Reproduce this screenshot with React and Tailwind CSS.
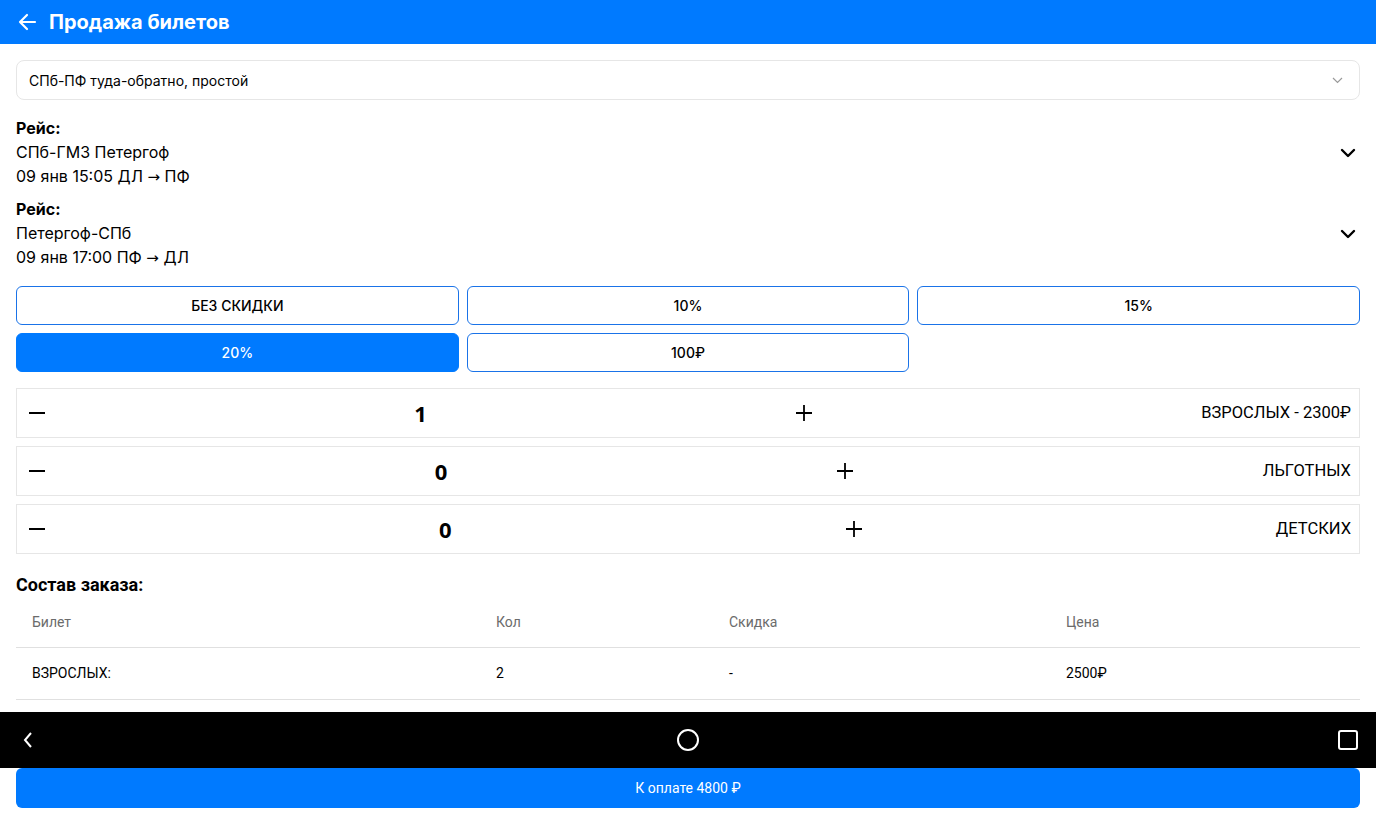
import { useState } from 'react'

const discounts = ['БЕЗ СКИДКИ', '10%', '15%', '20%', '100₽']

const trips = [
  { name: 'СПб-ГМЗ Петергоф', from: '09 янв 15:05 ДЛ', to: 'ПФ' },
  { name: 'Петергоф-СПб', from: '09 янв 17:00 ПФ', to: 'ДЛ' },
]

function Minus() {
  return (
    <svg width="16" height="16" viewBox="0 0 16 16">
      <path d="M0 8h16" stroke="#000" strokeWidth="2" />
    </svg>
  )
}

function Plus() {
  return (
    <svg width="18" height="18" viewBox="0 0 18 18">
      <path d="M1 9h16M9 1v16" stroke="#000" strokeWidth="1.8" />
    </svg>
  )
}

function Chevron() {
  return (
    <svg width="16" height="10" viewBox="0 0 16 10">
      <path d="M2 2l6 6 6-6" fill="none" stroke="#000" strokeWidth="2.4" strokeLinecap="round" strokeLinejoin="round" />
    </svg>
  )
}

export default function App() {
  const [discount, setDiscount] = useState('20%')
  const [counts, setCounts] = useState({ adult: 1, reduced: 0, child: 0 })

  const rows = [
    { key: 'adult', label: 'ВЗРОСЛЫХ - 2300₽' },
    { key: 'reduced', label: 'ЛЬГОТНЫХ' },
    { key: 'child', label: 'ДЕТСКИХ' },
  ]

  const change = (key, d) => setCounts((c) => ({ ...c, [key]: Math.max(0, c[key] + d) }))

  return (
    <div className="w-[1376px] h-[824px] overflow-hidden bg-white text-black font-['Inter',sans-serif] flex flex-col">
      {/* Header */}
      <div className="h-[44px] bg-[#007AFF] flex items-center px-[17px] gap-[12px] text-white shrink-0">
        <svg width="20" height="20" viewBox="0 0 20 20">
          <path d="M18 10H3M10 3l-7 7 7 7" fill="none" stroke="#fff" strokeWidth="2.2" strokeLinecap="round" strokeLinejoin="round" />
        </svg>
        <h1 className="text-[20px] font-bold leading-none">Продажа билетов</h1>
      </div>

      <div className="px-4 pt-[16px] flex flex-col">
        {/* Tariff select */}
        <div className="h-[40px] border border-[#e6e6e6] rounded-lg flex items-center justify-between pl-[12px] pr-[16px] text-[14px]">
          <span>СПб-ПФ туда-обратно, простой</span>
          <svg width="11" height="7" viewBox="0 0 11 7">
            <path d="M1 1l4.5 4.5L10 1" fill="none" stroke="#9a9a9a" strokeWidth="1.2" />
          </svg>
        </div>

        {/* Trips */}
        <div className="mt-[16px] flex flex-col gap-2">
          {trips.map((t, i) => (
            <div key={i} className="flex items-center justify-between text-[16px] leading-[24px]">
              <div>
                <div className="font-bold">Рейс:</div>
                <div>{t.name}</div>
                <div>
                  {t.from} <span className="font-['DejaVu_Sans',sans-serif] text-[15px]">→</span> {t.to}
                </div>
              </div>
              <div className="pr-[4px]">
                <Chevron />
              </div>
            </div>
          ))}
        </div>

        {/* Discounts */}
        <div className="mt-[16px] grid grid-cols-3 gap-2">
          {discounts.map((d) => (
            <button
              key={d}
              onClick={() => setDiscount(d)}
              className={`h-[39px] rounded-md border border-[#1a73e8] text-[14px] font-medium ${
                discount === d ? 'bg-[#007AFF] text-white border-[#007AFF]' : 'bg-white text-black'
              }`}
            >
              {d}
            </button>
          ))}
        </div>

        {/* Counters */}
        <div className="mt-[16px] flex flex-col gap-2">
          {rows.map((r) => (
            <div key={r.key} className="h-[50px] border border-[#e6e6e6] flex items-center justify-between pl-[4px] pr-[8px]">
              <button onClick={() => change(r.key, -1)} className="w-[32px] h-[32px] flex items-center justify-center">
                <Minus />
              </button>
              <span className="text-[22px] font-bold font-['Open_Sans',sans-serif]">{counts[r.key]}</span>
              <button onClick={() => change(r.key, 1)} className="w-[32px] h-[32px] flex items-center justify-center">
                <Plus />
              </button>
              <span className="pl-5 text-[16.5px] font-['Roboto',sans-serif] whitespace-pre">{r.label}</span>
            </div>
          ))}
        </div>

        {/* Order */}
        <h2 className="mt-[19px] text-[18px] font-bold font-['Roboto',sans-serif] leading-[24px]">Состав заказа:</h2>
        <div className="font-['Roboto',sans-serif] text-[14px]">
          <div className="grid grid-cols-[464px_233px_337px_1fr] h-[51px] items-center border-b border-[#e0e0e0] text-[#6b6b6b]">
            <span className="pl-4">Билет</span>
            <span className="pl-4">Кол</span>
            <span className="pl-4">Скидка</span>
            <span className="pl-4">Цена</span>
          </div>
          <div className="grid grid-cols-[464px_233px_337px_1fr] h-[52px] items-center border-b border-[#e0e0e0]">
            <span className="pl-4">ВЗРОСЛЫХ:</span>
            <span className="pl-4">2</span>
            <span className="pl-4">-</span>
            <span className="pl-4">2500₽</span>
          </div>
        </div>
      </div>

      {/* System navigation bar */}
      <div className="mt-auto h-[56px] bg-black flex items-center justify-between px-4 shrink-0">
        <div className="w-[24px] flex justify-center">
          <svg width="12" height="18" viewBox="0 0 12 18">
            <path d="M9 2L3 9l6 7" fill="none" stroke="#fff" strokeWidth="2" />
          </svg>
        </div>
        <div className="w-[24px] flex justify-center">
          <div className="w-[22px] h-[22px] rounded-full border-2 border-white" />
        </div>
        <div className="w-[24px] flex justify-center">
          <div className="w-[20px] h-[20px] rounded-[3px] border-2 border-white" />
        </div>
      </div>

      {/* Pay */}
      <div className="px-4 pb-[16px]">
        <button className="w-full h-[40px] bg-[#007AFF] rounded-md text-white text-[14px] font-['Roboto',sans-serif]">
          К оплате 4800 ₽
        </button>
      </div>
    </div>
  )
}
